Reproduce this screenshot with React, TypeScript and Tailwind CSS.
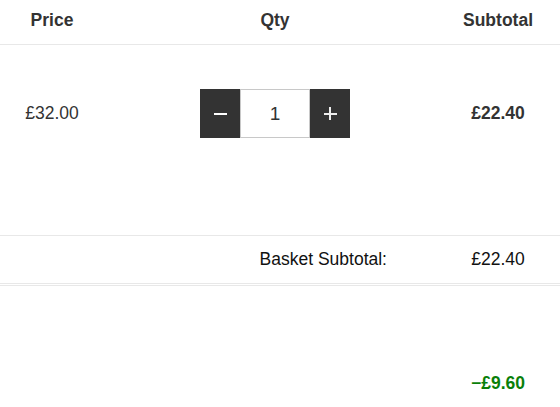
import React, { useState } from 'react'

const cols = 'grid grid-cols-[104px_342px_104px]'

const App = () => {
  const [qty, setQty] = useState(1)
  return (
    <div className="w-[560px] bg-white text-[17.5px] text-[#333] font-['Liberation_Sans',Arial,sans-serif]">
      {/* header */}
      <div className={`${cols} h-[45px] items-center border-b border-[#e8e8e8] font-bold pb-[4px]`}>
        <div className="text-center">Price</div>
        <div className="text-center">Qty</div>
        <div className="text-center">Subtotal</div>
      </div>

      {/* item */}
      <div className="h-[191px] border-b border-[#e8e8e8]">
        <div className={`${cols} items-center pt-[44px]`}>
          <div className="text-center">£32.00</div>
          <div className="flex justify-center">
            <button
              className="w-[40px] h-[49px] bg-[#333] flex items-center justify-center"
              onClick={() => setQty(Math.max(1, qty - 1))}
            >
              <span className="block w-[13px] h-[2px] bg-white" />
            </button>
            <input
              type="text"
              value={qty}
              readOnly
              className="w-[70px] h-[49px] border border-[#c8c8c8] text-center text-[19px] text-[#333] focus:outline-none"
            />
            <button
              className="w-[40px] h-[49px] bg-[#333] flex items-center justify-center relative"
              onClick={() => setQty(qty + 1)}
            >
              <span className="absolute w-[13px] h-[2px] bg-[#eee]" />
              <span className="absolute w-[2px] h-[13px] bg-[#eee]" />
            </button>
          </div>
          <div className="text-center font-bold">£22.40</div>
        </div>
      </div>

      {/* basket subtotal */}
      <div className={`${cols} h-[48px] items-center border-b border-[#e8e8e8] text-[#111]`}>
        <div />
        <div className="text-right pr-[59px]">Basket Subtotal:</div>
        <div className="text-center">£22.40</div>
      </div>

      {/* discount */}
      <div className={`${cols} h-[140px] border-t border-[#e8e8e8] mt-[1px] pt-[84px]`}>
        <div />
        <div />
        <div className="text-center font-bold text-[#0a7f0a]">−£9.60</div>
      </div>
    </div>
  )
}

export default App
